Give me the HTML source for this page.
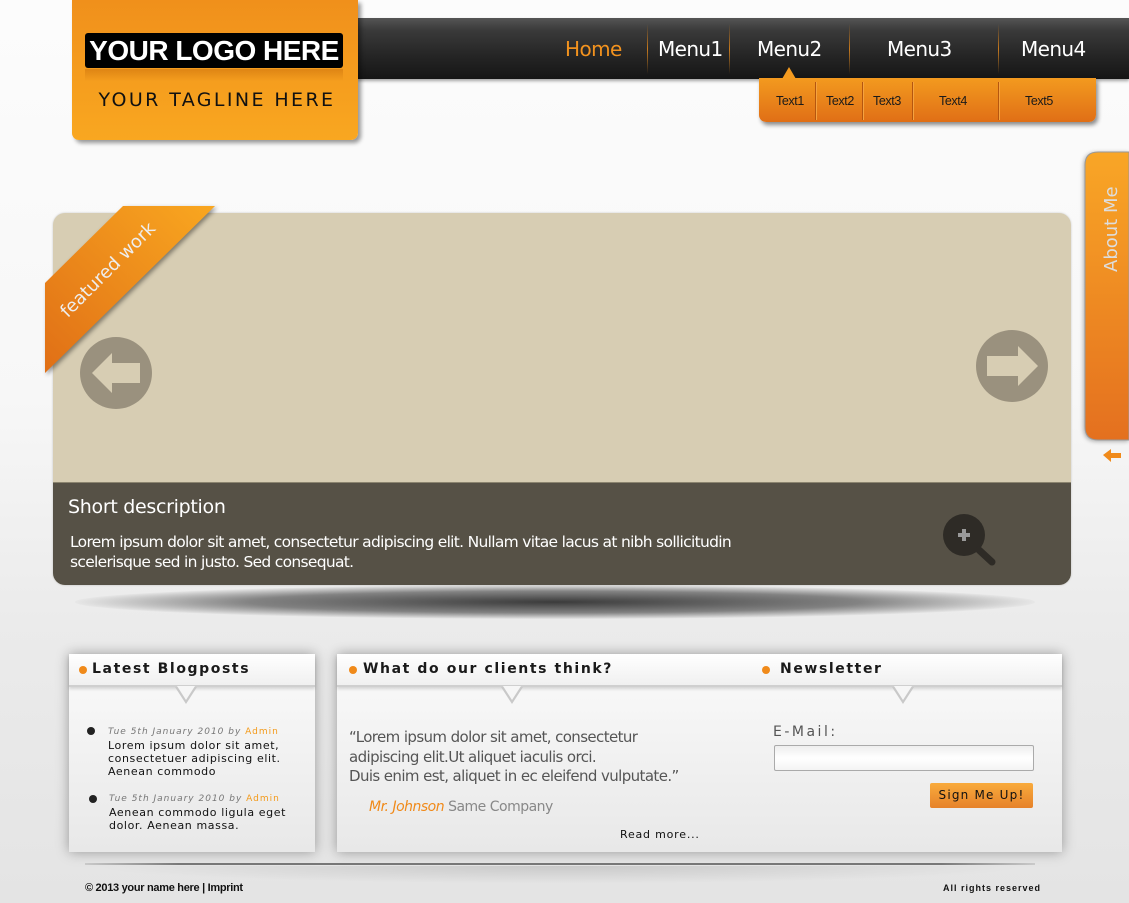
<!DOCTYPE html>
<html><head><meta charset="utf-8"><style>
*{margin:0;padding:0;box-sizing:border-box}
body{width:1129px;height:903px;overflow:hidden;position:relative;font-family:"Liberation Sans",sans-serif;background:linear-gradient(#fcfcfc 0,#f7f7f7 400px,#ebebeb 620px,#e4e4e4 903px)}
.a{position:absolute;white-space:nowrap}
.nav{left:358px;top:18px;width:771px;height:61px;background:linear-gradient(#555 0,#3a3a3a 20%,#262626 60%,#151515 100%);box-shadow:0 2px 3px rgba(0,0,0,.35)}
.mi{top:37px;color:#fff;font-size:20px;font-family:"DejaVu Sans",sans-serif;letter-spacing:-.6px}
.sep{top:24px;width:1px;height:50px;background:linear-gradient(rgba(220,130,20,0),#c77a1e,rgba(220,130,20,0))}
.drop{left:759px;top:78px;width:337px;height:44px;background:linear-gradient(#f39a1f,#e06f16);border-radius:0 0 7px 7px;box-shadow:2px 3px 4px rgba(0,0,0,.45)}
.dt{top:94px;font-size:12.5px;color:#1a1a1a;letter-spacing:-.4px}
.dsep{top:82px;width:1px;height:38px;background:#b5560f;box-shadow:1px 0 0 #f5a340}
.logo{left:72px;top:0;width:286px;height:140px;background:linear-gradient(#f0901b,#f9a720);border-radius:0 0 7px 7px;box-shadow:3px 3px 4px rgba(0,0,0,.4)}
.slider{left:53px;top:213px;width:1018px;height:372px;border-radius:12px;overflow:hidden;background:#d7cdb3;box-shadow:0 0 2px rgba(0,0,0,.2)}
.cap{left:0;top:269px;width:1018px;height:103px;background:#565146;border-top:1px solid #8b846f}
.box{background:linear-gradient(#fbfbfb,#e8e8e8);box-shadow:0 0 12px rgba(0,0,0,.35)}
.hd{height:33px;background:linear-gradient(#fff,#f0f0f0);border-bottom:2px solid #cfcfcf;box-shadow:0 2px 3px rgba(0,0,0,.15)}
.ht{font-family:"DejaVu Sans",sans-serif;font-weight:bold;font-size:14px;letter-spacing:1.6px;color:#1a1a1a}
.dot{width:8px;height:8px;border-radius:50%;background:#f08a1a}
.tri{width:0;height:0;border-left:11px solid transparent;border-right:11px solid transparent;border-top:17px solid #c9c9c9}
.tri2{width:0;height:0;border-left:9px solid transparent;border-right:9px solid transparent;border-top:14px solid #f6f6f6}
.bp{font-family:"DejaVu Sans",sans-serif;font-size:11px;letter-spacing:.6px;color:#111;line-height:13px}
.meta{font-style:italic;font-size:9px;color:#777;letter-spacing:1px}
.meta b{color:#f39a1a;font-style:normal;font-weight:normal}
</style></head><body>

<div class="a nav"></div>
<div class="a mi" style="left:565px;color:#f2921e">Home</div>
<div class="a sep" style="left:647px"></div>
<div class="a mi" style="left:658px">Menu1</div>
<div class="a sep" style="left:729px"></div>
<div class="a mi" style="left:757px">Menu2</div>
<div class="a sep" style="left:849px"></div>
<div class="a mi" style="left:887px">Menu3</div>
<div class="a sep" style="left:998px"></div>
<div class="a mi" style="left:1021px">Menu4</div>

<div class="a drop"></div>
<div class="a" style="left:782px;top:67px;width:0;height:0;border-left:7px solid transparent;border-right:7px solid transparent;border-bottom:12px solid #f39a1f"></div>
<div class="a dt" style="left:776px">Text1</div>
<div class="a dsep" style="left:815px"></div>
<div class="a dt" style="left:826px">Text2</div>
<div class="a dsep" style="left:862px"></div>
<div class="a dt" style="left:873px">Text3</div>
<div class="a dsep" style="left:912px"></div>
<div class="a dt" style="left:939px">Text4</div>
<div class="a dsep" style="left:998px"></div>
<div class="a dt" style="left:1025px">Text5</div>

<div class="a logo"></div>
<div class="a" style="left:85px;top:33px;width:258px;height:35px;background:#000;border-radius:3px;color:#fff;font-weight:bold;font-size:28px;line-height:35px;text-align:center;letter-spacing:-.5px">YOUR LOGO HERE</div>
<div class="a" style="left:85px;top:69px;width:258px;height:12px;background:linear-gradient(rgba(200,110,10,.5),rgba(240,150,30,0))"></div>
<div class="a" style="left:72px;top:89px;width:290px;text-align:center;font-family:'DejaVu Sans',sans-serif;font-size:19px;letter-spacing:2.4px;color:#111">YOUR TAGLINE HERE</div>

<div class="a" style="left:75px;top:585px;width:960px;height:34px;border-radius:50%;background:radial-gradient(ellipse at center,rgba(40,40,40,.9) 0,rgba(60,60,60,.6) 45%,rgba(200,200,200,0) 72%)"></div>
<div class="a slider">
 <div class="a cap">
  <div class="a" style="left:15px;top:13px;color:#fff;font-size:19px;font-family:'DejaVu Sans',sans-serif;letter-spacing:-.3px">Short description</div>
  <div class="a" style="left:17px;top:49px;color:#fff;font-size:15.5px;line-height:20px;font-family:'DejaVu Sans',sans-serif;letter-spacing:-.7px">Lorem ipsum dolor sit amet, consectetur adipiscing elit. Nullam vitae lacus at nibh sollicitudin<br>scelerisque sed in justo. Sed consequat.</div>
 </div>
</div>
<svg class="a" style="left:0;top:0" width="1129" height="903">
 <circle cx="116" cy="373" r="36" fill="#9a917e"/>
 <path d="M92 373 L112 353 L112 363 L140 363 L140 383 L112 383 L112 393 Z" fill="#d7cdb3"/>
 <circle cx="1012" cy="366" r="36" fill="#9a917e"/>
 <path d="M1038 366 L1018 346 L1018 356 L987 356 L987 376 L1018 376 L1018 386 Z" fill="#d7cdb3"/>
 <circle cx="964" cy="535" r="21" fill="#2e2b26"/>
 <path d="M979 550 L992 562" stroke="#2e2b26" stroke-width="7" stroke-linecap="round"/>
 <path d="M958 535 H970 M964 529 V541" stroke="#999" stroke-width="4"/>
 <defs><linearGradient id="rb" x1="0" y1="1" x2="1" y2="0"><stop offset="0" stop-color="#e06f16"/><stop offset="1" stop-color="#f9a720"/></linearGradient>
 <linearGradient id="am" x1="0" y1="0" x2="0" y2="1"><stop offset="0" stop-color="#f9a626"/><stop offset="1" stop-color="#e4701f"/></linearGradient></defs>
 <path d="M45 283 L123 206 L215 206 L45 373 Z" fill="url(#rb)" style="filter:drop-shadow(2px 2px 2px rgba(0,0,0,.4))"/>
 <text x="0" y="0" transform="translate(112 274) rotate(-45)" text-anchor="middle" font-family="DejaVu Sans,sans-serif" font-size="18" fill="#eee">featured work</text>
 <path d="M1129 152 L1098 152 Q1085 152 1085 165 L1085 427 Q1085 440 1098 440 L1129 440 Z" fill="url(#am)" stroke="#999" stroke-width="1" style="filter:drop-shadow(-1px 1px 2px rgba(0,0,0,.3))"/>
 <text transform="translate(1117 272) rotate(-90)" font-family="DejaVu Sans,sans-serif" font-size="18" fill="#ddd">About Me</text>
 <path d="M1103 455 L1111 449 L1111 453 L1121 453 L1121 458 L1111 458 L1111 462 Z" fill="#f08a1a"/>
</svg>

<div class="a box" style="left:69px;top:654px;width:246px;height:198px"></div>
<div class="a hd" style="left:69px;top:654px;width:246px"></div>
<div class="a tri" style="left:175px;top:687px"></div><div class="a tri2" style="left:177px;top:686px"></div>
<div class="a dot" style="left:79px;top:666px"></div>
<div class="a ht" style="left:92px;top:661px">Latest Blogposts</div>
<div class="a" style="left:87px;top:727px;width:8px;height:8px;border-radius:50%;background:#222"></div>
<div class="a bp" style="left:108px;top:726px"><div class="meta">Tue 5th January 2010 by <b>Admin</b></div>Lorem ipsum dolor sit amet,<br>consectetuer adipiscing elit.<br>Aenean commodo</div>
<div class="a" style="left:89px;top:795px;width:8px;height:8px;border-radius:50%;background:#222"></div>
<div class="a bp" style="left:109px;top:793px"><div class="meta">Tue 5th January 2010 by <b>Admin</b></div>Aenean commodo ligula eget<br>dolor. Aenean massa.</div>

<div class="a box" style="left:337px;top:654px;width:725px;height:198px"></div>
<div class="a hd" style="left:337px;top:654px;width:725px"></div>
<div class="a tri" style="left:501px;top:687px"></div><div class="a tri2" style="left:503px;top:686px"></div>
<div class="a tri" style="left:892px;top:687px"></div><div class="a tri2" style="left:894px;top:686px"></div>
<div class="a dot" style="left:349px;top:666px"></div>
<div class="a ht" style="left:363px;top:661px">What do our clients think?</div>
<div class="a dot" style="left:762px;top:666px"></div>
<div class="a ht" style="left:780px;top:661px">Newsletter</div>
<div class="a" style="left:349px;top:728px;font-family:'DejaVu Sans',sans-serif;font-size:15px;line-height:19.5px;color:#555;letter-spacing:-.6px">“Lorem ipsum dolor sit amet, consectetur<br>adipiscing elit.Ut aliquet iaculis orci.<br>Duis enim est, aliquet in ec eleifend vulputate.”</div>
<div class="a" style="left:369px;top:799px;font-family:'DejaVu Sans',sans-serif;font-size:14px;color:#888;letter-spacing:-.5px"><i style="color:#f08a1a">Mr. Johnson</i> Same Company</div>
<div class="a" style="left:620px;top:828px;font-family:'DejaVu Sans',sans-serif;font-size:11px;letter-spacing:.8px;color:#111">Read more...</div>
<div class="a" style="left:773px;top:724px;font-family:'DejaVu Sans',sans-serif;font-size:14px;letter-spacing:2.5px;color:#555">E-Mail:</div>
<div class="a" style="left:774px;top:745px;width:260px;height:26px;border:1px solid #aaa;border-radius:2px;background:linear-gradient(#eee,#fff,#f4f4f4)"></div>
<div class="a" style="left:930px;top:783px;width:103px;height:25px;border-radius:2px;background:linear-gradient(#f9ab3c,#e6822a);font-family:'DejaVu Sans',sans-serif;font-size:12px;letter-spacing:1.2px;color:#111;text-align:center;line-height:25px">Sign Me Up!</div>

<div class="a" style="left:85px;top:863px;width:950px;height:2px;background:linear-gradient(90deg,rgba(100,100,100,.2),#777 10%,#777 90%,rgba(100,100,100,.2))"></div>
<div class="a" style="left:90px;top:866px;width:940px;height:18px;background:radial-gradient(ellipse at top,rgba(0,0,0,.12),rgba(0,0,0,0) 70%)"></div>
<div class="a" style="left:85px;top:882px;font-size:11px;font-weight:bold;color:#111;letter-spacing:-.3px">© 2013 your name here | Imprint</div>
<div class="a" style="left:943px;top:883px;font-size:9px;font-weight:bold;color:#111;letter-spacing:1px">All rights reserved</div>
</body></html>
